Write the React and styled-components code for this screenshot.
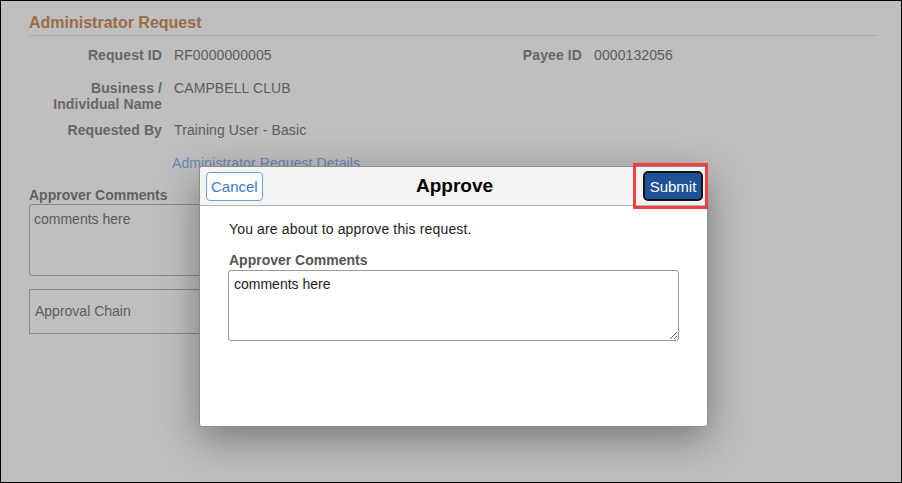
import styled, { createGlobalStyle } from "styled-components";

const GlobalStyle = createGlobalStyle`
  * { box-sizing: border-box; }
  body {
    margin: 0;
    font-family: "Liberation Sans", Arial, sans-serif;
    background: #ffffff;
  }
`;

const Frame = styled.div`
  position: relative;
  width: 902px;
  height: 483px;
  border: 1px solid #000;
  overflow: hidden;
  background: #ffffff;
`;

const Page = styled.div`
  padding: 13px 24px 0 28px;
`;

const PageTitle = styled.h2`
  margin: 0;
  font-size: 16px;
  line-height: 18px;
  font-weight: 700;
  color: #cf8f5e;
  padding-bottom: 3px;
  border-bottom: 1px solid #e0e0e0;
`;

const Fields = styled.div`
  display: grid;
  grid-template-columns: 133px 263px 133px 1fr;
  column-gap: 12px;
  row-gap: 10px;
  grid-auto-rows: minmax(23px, auto);
  margin-top: 11px;
  font-size: 14px;
  line-height: 16px;
  letter-spacing: 0.1px;
`;

const Label = styled.div`
  text-align: right;
  font-weight: 700;
  color: #8a8a8a;
`;

const Value = styled.div`
  color: #7c7c7c;
  grid-column: ${(p) => p.$span || "auto"};
`;

const DetailsLink = styled.a`
  grid-column: 2 / span 3;
  margin-left: -2px;
  color: #92b4ee;
  text-decoration: none;
  cursor: pointer;
`;

const Section = styled.div`
  width: 420px;
  margin-top: 9px;
`;

const SectionLabel = styled.div`
  font-size: 14px;
  line-height: 16px;
  font-weight: 700;
  color: #828282;
  margin-bottom: 1px;
`;

const CommentsBox = styled.div`
  height: 72px;
  border: 1px solid #b8b8b8;
  border-radius: 3px;
  padding: 6px 4px;
  font-size: 14px;
  line-height: 16px;
  color: #787878;
`;

const ChainBox = styled.div`
  display: flex;
  align-items: center;
  height: 45px;
  margin-top: 13px;
  padding: 0 5px 2px;
  border: 1px solid #b8b8b8;
  font-size: 14px;
  color: #7d7d7d;
`;

const Backdrop = styled.div`
  position: absolute;
  inset: 0;
  background: rgba(0, 0, 0, 0.25);
`;

const Modal = styled.div`
  position: absolute;
  left: 198px;
  top: 165px;
  width: 509px;
  height: 261px;
  background: #ffffff;
  border: 1px solid #8c8c8c;
  border-radius: 3px;
  box-shadow: 0 12px 40px rgba(0, 0, 0, 0.38);
`;

const ModalHeader = styled.div`
  display: grid;
  grid-template-columns: 1fr auto 1fr;
  align-items: center;
  height: 39px;
  padding: 0 4px 0 6px;
  background: #f4f4f4;
  border-bottom: 1px solid #b4b4b4;
  border-radius: 3px 3px 0 0;
`;

const ModalTitle = styled.h1`
  margin: 0;
  font-size: 19px;
  line-height: 22px;
  font-weight: 700;
  color: #000;
`;

const CancelButton = styled.button`
  justify-self: start;
  height: 29px;
  margin-top: 1px;
  padding: 0 4px;
  background: #ffffff;
  border: 1px solid #6a9fe2;
  border-radius: 4px;
  font-family: inherit;
  font-size: 15px;
  color: #3d79d2;
`;

const Highlight = styled.div`
  justify-self: end;
  position: relative;
  display: flex;

  &::after {
    content: "";
    position: absolute;
    left: -10px;
    right: -5px;
    top: -8px;
    bottom: -8px;
    border: 3px solid #f24141;
    pointer-events: none;
  }
`;

const SubmitButton = styled.button`
  width: 60px;
  height: 30px;
  padding: 0;
  background: #1d5296;
  border: 2px solid #151515;
  border-radius: 5px;
  font-family: inherit;
  font-size: 15px;
  color: #ffffff;
`;

const ModalBody = styled.div`
  padding: 15px 29px;
  font-size: 14px;
  line-height: 16px;
`;

const Message = styled.p`
  margin: 0;
  color: #222;
  letter-spacing: 0.15px;
`;

const FieldLabel = styled.div`
  margin-top: 15px;
  font-weight: 700;
  color: #555;
`;

const CommentInput = styled.textarea`
  display: block;
  width: 451px;
  height: 71px;
  margin: 2px 0 0 -1px;
  padding: 5px 5px;
  border: 1px solid #9a9a9a;
  border-radius: 3px;
  font-family: inherit;
  font-size: 14px;
  line-height: 16px;
  color: #222;
  outline: none;
`;

export default function App() {
  return (
    <>
      <GlobalStyle />
      <Frame>
        <Page>
          <PageTitle>Administrator Request</PageTitle>
          <Fields>
            <Label>Request ID</Label>
            <Value>RF0000000005</Value>
            <Label>Payee ID</Label>
            <Value>0000132056</Value>

            <Label>
              Business /<br />
              Individual Name
            </Label>
            <Value $span="2 / span 3">CAMPBELL CLUB</Value>

            <Label>Requested By</Label>
            <Value $span="2 / span 3">Training User - Basic</Value>

            <div />
            <DetailsLink>Administrator Request Details</DetailsLink>
          </Fields>

          <Section>
            <SectionLabel>Approver Comments</SectionLabel>
            <CommentsBox>comments here</CommentsBox>
            <ChainBox>Approval Chain</ChainBox>
          </Section>
        </Page>

        <Backdrop />

        <Modal>
          <ModalHeader>
            <CancelButton>Cancel</CancelButton>
            <ModalTitle>Approve</ModalTitle>
            <Highlight>
              <SubmitButton>Submit</SubmitButton>
            </Highlight>
          </ModalHeader>
          <ModalBody>
            <Message>You are about to approve this request.</Message>
            <FieldLabel>Approver Comments</FieldLabel>
            <CommentInput readOnly defaultValue="comments here" />
          </ModalBody>
        </Modal>
      </Frame>
    </>
  );
}
